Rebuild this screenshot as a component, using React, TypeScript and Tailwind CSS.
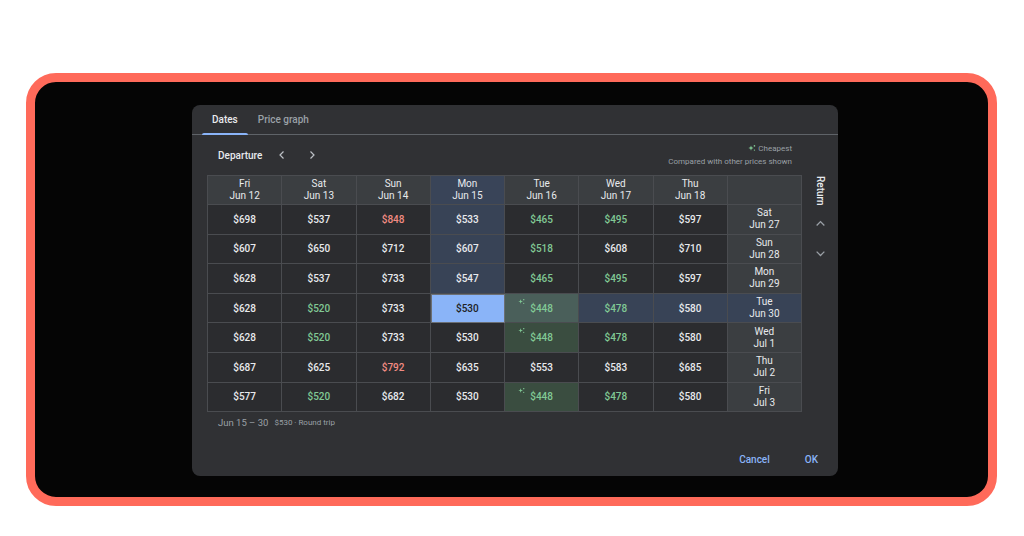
import React from "react";

type Cell = { v: string; c?: "g" | "r"; star?: boolean };

const rows: { d: string; dt: string; cells: Cell[] }[] = [
  { d: "Sat", dt: "Jun 27", cells: [{ v: "$698" }, { v: "$537" }, { v: "$848", c: "r" }, { v: "$533" }, { v: "$465", c: "g" }, { v: "$495", c: "g" }, { v: "$597" }] },
  { d: "Sun", dt: "Jun 28", cells: [{ v: "$607" }, { v: "$650" }, { v: "$712" }, { v: "$607" }, { v: "$518", c: "g" }, { v: "$608" }, { v: "$710" }] },
  { d: "Mon", dt: "Jun 29", cells: [{ v: "$628" }, { v: "$537" }, { v: "$733" }, { v: "$547" }, { v: "$465", c: "g" }, { v: "$495", c: "g" }, { v: "$597" }] },
  { d: "Tue", dt: "Jun 30", cells: [{ v: "$628" }, { v: "$520", c: "g" }, { v: "$733" }, { v: "$530" }, { v: "$448", c: "g", star: true }, { v: "$478", c: "g" }, { v: "$580" }] },
  { d: "Wed", dt: "Jul 1", cells: [{ v: "$628" }, { v: "$520", c: "g" }, { v: "$733" }, { v: "$530" }, { v: "$448", c: "g", star: true }, { v: "$478", c: "g" }, { v: "$580" }] },
  { d: "Thu", dt: "Jul 2", cells: [{ v: "$687" }, { v: "$625" }, { v: "$792", c: "r" }, { v: "$635" }, { v: "$553" }, { v: "$583" }, { v: "$685" }] },
  { d: "Fri", dt: "Jul 3", cells: [{ v: "$577" }, { v: "$520", c: "g" }, { v: "$682" }, { v: "$530" }, { v: "$448", c: "g", star: true }, { v: "$478", c: "g" }, { v: "$580" }] },
];

const heads = [
  ["Fri", "Jun 12"],
  ["Sat", "Jun 13"],
  ["Sun", "Jun 14"],
  ["Mon", "Jun 15"],
  ["Tue", "Jun 16"],
  ["Wed", "Jun 17"],
  ["Thu", "Jun 18"],
];

function Sparkle({ className }: { className?: string }) {
  return (
    <svg viewBox="0 0 12 10" className={className} fill="#81c995">
      <path d="M4 1.5 L4.9 4.1 L7.5 5 L4.9 5.9 L4 8.5 L3.1 5.9 L0.5 5 L3.1 4.1 Z" />
      <circle cx="8.6" cy="2.2" r="1.1" />
      <circle cx="8.6" cy="7.8" r="0.9" />
    </svg>
  );
}

function cellBg(r: number, c: number): string {
  if (r === 3 && c === 3) return "bg-[#8ab4f8]";
  if (r === 3 && c === 4) return "bg-[#4a5f5a]";
  if (r === 3 && c > 4) return "bg-[#384356]";
  if (c === 3 && r < 3) return "bg-[#384356]";
  if (c === 4 && (r === 4 || r === 6)) return "bg-[#3a4d40]";
  return "bg-[#2b2c2f]";
}

export default function App() {
  return (
    <div className="w-[1024px] h-[536px] bg-white pt-[73px] pl-[26px]" style={{ fontFamily: "Roboto, 'Liberation Sans', sans-serif" }}>
      <div className="w-[971px] h-[433px] rounded-[30px] border-[9px] border-[#ff6a5a] bg-[#050505] pl-[157px] pt-[23px]">
        <div className="w-[646px] h-[371px] rounded-[8px] bg-[#303134] flex flex-col">
          {/* tabs */}
          <div className="h-[30px] flex items-end pl-[10px] border-b border-[#5f6368]">
            <div className="relative h-[29px] px-[10px] flex items-center text-[10px] font-medium text-[#e8eaed]">
              Dates
              <div className="absolute left-0 right-0 bottom-[-1px] h-[2px] bg-[#8ab4f8] rounded-t-[2px]" />
            </div>
            <div className="h-[29px] px-[10px] flex items-center text-[10px] font-medium text-[#9aa0a6]">Price graph</div>
          </div>
          {/* body */}
          <div className="flex pl-[15px]">
            <div className="w-[595px] flex flex-col">
              <div className="h-[40px] flex items-center justify-between pl-[11px] pr-[10px]">
                <div className="flex items-center">
                  <span className="text-[10px] font-medium text-[#e8eaed]">Departure</span>
                  <svg viewBox="0 0 10 10" className="w-[10px] h-[10px] ml-[15px]" fill="none" stroke="#bdc1c6" strokeWidth="1.2">
                    <path d="M6.5 1.5 L3 5 L6.5 8.5" />
                  </svg>
                  <svg viewBox="0 0 10 10" className="w-[10px] h-[10px] ml-[20px]" fill="none" stroke="#bdc1c6" strokeWidth="1.2">
                    <path d="M3.5 1.5 L7 5 L3.5 8.5" />
                  </svg>
                </div>
                <div className="flex flex-col items-end text-[8px] leading-[13px] text-[#9aa0a6] mt-[-1px]">
                  <div className="flex items-center gap-[1px]">
                    <Sparkle className="w-[9px] h-[8px]" />
                    <span>Cheapest</span>
                  </div>
                  <div>Compared with other prices shown</div>
                </div>
              </div>
              {/* table */}
              <div className="grid grid-cols-8 border-l border-t border-[#4a4c50] text-[10px] text-[#e8eaed]">
                {heads.map(([a, b], i) => (
                  <div key={i} className={`h-[29px] flex flex-col items-center justify-center leading-[12px] border-r border-b border-[#4a4c50] ${i === 3 ? "bg-[#394458]" : "bg-[#3b3e41]"}`}>
                    <span>{a}</span>
                    <span>{b}</span>
                  </div>
                ))}
                <div className={`h-[29px] border-r border-b border-[#4a4c50] bg-[#3b3e41]`} />
                {rows.map((row, r) => (
                  <React.Fragment key={r}>
                    {row.cells.map((cell, c) => {
                      const sel = r === 3 && c === 3;
                      const color = sel ? "text-[#202124]" : cell.c === "g" ? "text-[#81c995]" : cell.c === "r" ? "text-[#f28b82]" : "text-[#e8eaed]";
                      return (
                        <div key={c} className={`relative h-[29.6px] flex items-center justify-center font-medium border-r border-b border-[#4a4c50] ${cellBg(r, c)} ${color} ${sel ? "outline outline-1 outline-[#6b6f74] -outline-offset-1" : ""}`}>
                          {cell.star && <Sparkle className="absolute left-[13px] top-[4px] w-[8px] h-[7px]" />}
                          <span>{cell.v}</span>
                        </div>
                      );
                    })}
                    <div className={`h-[29.6px] flex flex-col items-center justify-center leading-[12px] border-r border-b border-[#4a4c50] ${r === 3 ? "bg-[#384356]" : "bg-[#3b3e41]"}`}>
                      <span>{row.d}</span>
                      <span>{row.dt}</span>
                    </div>
                  </React.Fragment>
                ))}
              </div>
              <div className="flex items-center pl-[11px] mt-[5px] h-[12px]">
                <span className="text-[9.5px] text-[#9aa0a6]">Jun 15 – 30</span>
                <span className="text-[8px] text-[#9aa0a6] ml-[6px]">$530 · Round trip</span>
              </div>
            </div>
            <div className="w-[36px] flex flex-col items-center pt-[41px]">
              <div className="text-[10px] font-medium text-[#e8eaed] [writing-mode:vertical-rl] leading-[12px] h-[28px]">Return</div>
              <svg viewBox="0 0 10 10" className="w-[11px] h-[11px] mt-[14px]" fill="none" stroke="#9aa0a6" strokeWidth="1.2">
                <path d="M1.5 6.8 L5 3.3 L8.5 6.8" />
              </svg>
              <svg viewBox="0 0 10 10" className="w-[11px] h-[11px] mt-[19px]" fill="none" stroke="#9aa0a6" strokeWidth="1.2">
                <path d="M1.5 3.3 L5 6.8 L8.5 3.3" />
              </svg>
            </div>
          </div>
          <div className="flex-1" />
          <div className="h-[34px] flex items-center justify-end pr-[20px] text-[10px] font-medium text-[#8ab4f8]">
            <span>Cancel</span>
            <span className="ml-[35px]">OK</span>
          </div>
        </div>
      </div>
    </div>
  );
}
